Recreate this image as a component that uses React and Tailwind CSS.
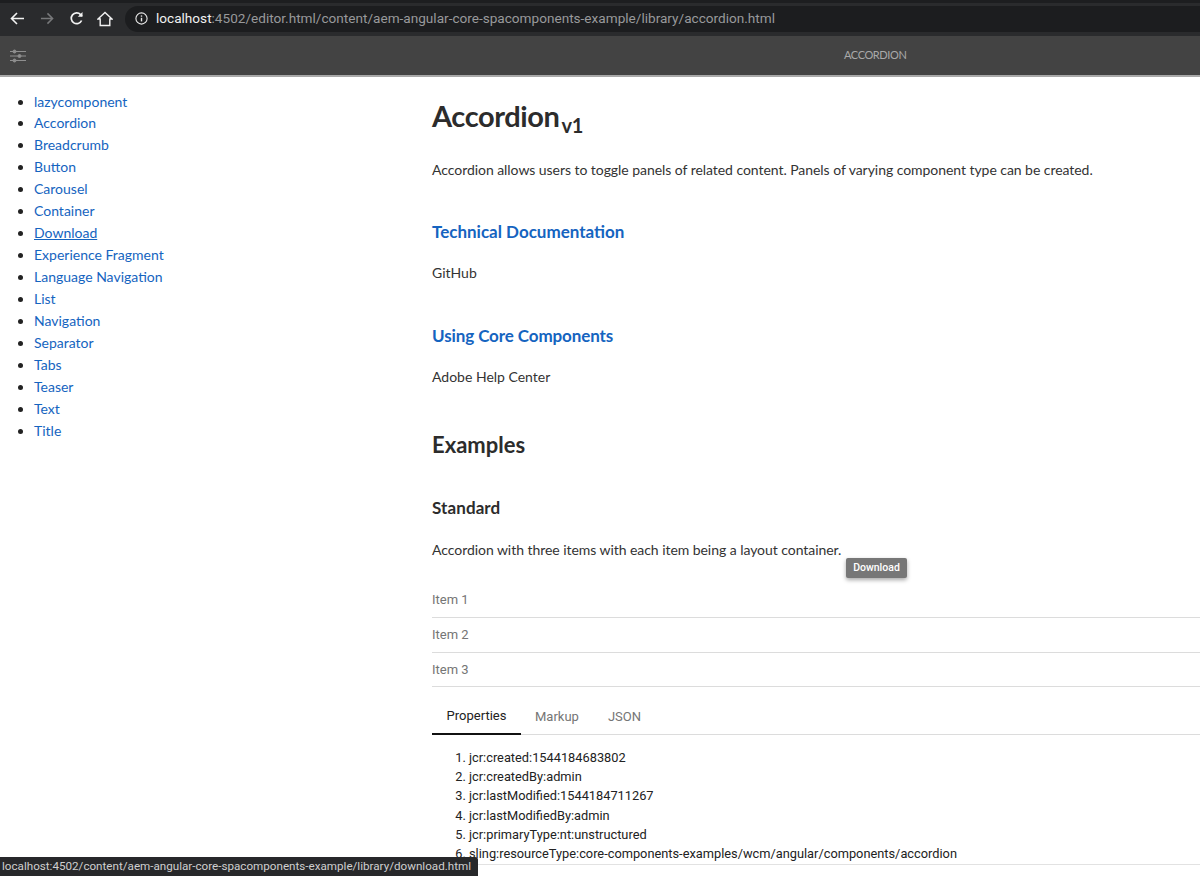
import React from "react";

const links = ["lazycomponent","Accordion","Breadcrumb","Button","Carousel","Container","Download","Experience Fragment","Language Navigation","List","Navigation","Separator","Tabs","Teaser","Text","Title"];
const props = ["jcr:created:1544184683802","jcr:createdBy:admin","jcr:lastModified:1544184711267","jcr:lastModifiedBy:admin","jcr:primaryType:nt:unstructured","sling:resourceType:core-components-examples/wcm/angular/components/accordion"];
const lato = "font-['Lato','Noto_Sans',sans-serif]";
const roboto = "font-['Roboto',sans-serif]";

function Sliders() {
  return (
    <svg width="18" height="14" viewBox="0 0 18 14" fill="none" stroke="#8f8f8f" strokeWidth="1">
      <path d="M1 2.5h3M7 2.5h10M1 7h8M12 7h5M1 11.5h3M7 11.5h10" />
      <circle cx="5.5" cy="2.5" r="1.5" fill="#8f8f8f" />
      <circle cx="10.5" cy="7" r="1.5" fill="#8f8f8f" />
      <circle cx="5.5" cy="11.5" r="1.5" fill="#8f8f8f" />
    </svg>
  );
}

export default function App() {
  return (
    <div className={`relative h-[876px] w-[1200px] overflow-hidden bg-white ${lato}`}>
      <div className="flex h-[36px] items-center bg-[#2a2b2d] border-t-[3px] border-[#1d1e20] pb-[2px]">
        <svg className="ml-[10px]" width="15" height="15" viewBox="0 0 15 15" fill="none" stroke="#f2f2f2" strokeWidth="1.6"><path d="M14 7.5H1.5M7 2L1.5 7.5 7 13" /></svg>
        <svg className="ml-[15px]" width="14" height="15" viewBox="0 0 15 15" fill="none" stroke="#77787a" strokeWidth="1.6"><path d="M1 7.5h12.5M8 2l5.5 5.5L8 13" /></svg>
        <svg className="ml-[15px]" width="15" height="15" viewBox="0 0 15 15" fill="none" stroke="#f2f2f2" strokeWidth="1.7"><path d="M12.6 9.5A5.4 5.4 0 1 1 11.6 3.6L13 5" /><path d="M13.5 1v4.7H8.8" fill="#f2f2f2" stroke="none" /></svg>
        <svg className="ml-[13px]" width="16" height="16" viewBox="0 0 16 16" fill="none" stroke="#f2f2f2" strokeWidth="1.4"><path d="M1 8l7-6.5L15 8h-2.2v6.5H3.2V8z" /></svg>
        <div className={`ml-[12px] flex h-[26px] flex-1 items-center rounded-l-[13px] bg-[#1c1d1f] pl-[10px] ${roboto} text-[13.6px]`}>
          <svg width="13" height="13" viewBox="0 0 13 13" fill="none" stroke="#e8e8e8" strokeWidth="1.1"><circle cx="6.5" cy="6.5" r="5.6" /><path d="M6.5 5.8v3.6" strokeWidth="1.4" /><path d="M6.5 3.4v1.3" strokeWidth="1.4" /></svg>
          <span className="ml-[8px] text-[#f0f0f0]">localhost</span>
          <span className="text-[#98999b]">:4502/editor.html/content/aem-angular-core-spacomponents-example/library/accordion.html</span>
        </div>
      </div>
      <div className="relative flex h-[41px] items-center border-b-[2px] border-[#a8a8a8] bg-[#434343] pl-[9px]">
        <Sliders />
        <span className="absolute left-[844px] text-[11px] tracking-[-0.4px] text-[#a9a9a9]">ACCORDION</span>
      </div>
      <div className="flex">
        <ul className="w-[432px] list-disc pl-[34px] pt-[13.5px] text-[14px] leading-[21.95px] text-[#1564c0] marker:text-[#222]">
          {links.map((l) => (
            <li key={l} className={l === "Download" ? "underline" : ""}>{l}</li>
          ))}
        </ul>
        <main className="flex-1 text-[#333]">
          <h1 className="mt-[21px] h-[36px] text-[29px] leading-[36px] font-bold tracking-[-0.4px] text-[#2c2c2c]">
            Accordion<sub className="ml-[2px] text-[20px] align-[-1px] leading-none">v1</sub>
          </h1>
          <p className="mt-[25px] h-[22px] text-[14px] leading-[22px] tracking-[-0.05px]">Accordion allows users to toggle panels of related content. Panels of varying component type can be created.</p>
          <h3 className="mt-[40px] h-[22px] text-[17px] leading-[22px] font-bold text-[#1564c0]">Technical Documentation</h3>
          <p className="mt-[19px] h-[22px] text-[14px] leading-[22px]">GitHub</p>
          <h3 className="mt-[41px] h-[22px] text-[17px] leading-[22px] font-bold tracking-[-0.1px] text-[#1564c0]">Using Core Components</h3>
          <p className="mt-[19px] h-[22px] text-[14px] leading-[22px]">Adobe Help Center</p>
          <h2 className="mt-[43px] h-[28px] text-[22px] leading-[28px] font-bold text-[#2c2c2c]">Examples</h2>
          <h4 className="mt-[38px] h-[22px] text-[17px] leading-[22px] font-bold tracking-[0.1px] text-[#2c2c2c]">Standard</h4>
          <p className="mt-[20px] h-[22px] text-[14px] leading-[22px] tracking-[-0.05px]">Accordion with three items with each item being a layout container.</p>
          <div className={`mt-[22px] ${roboto} text-[13px] text-[#757575]`}>
            <div className="flex h-[35px] items-center border-b border-[#dcdcdc]">Item 1</div>
            <div className="flex h-[35px] items-center border-b border-[#dcdcdc] pb-[1px]">Item 2</div>
            <div className="flex h-[34px] items-center border-b border-[#dcdcdc]">Item 3</div>
          </div>
          <div className={`mt-[12px] flex h-[36px] border-b border-[#dcdcdc] ${roboto} text-[13px] text-[#757575]`}>
            <div className="flex h-[36px] w-[89px] items-center justify-center border-b-2 border-[#111] text-[#222]">Properties</div>
            <div className="ml-[14px] flex h-[35px] items-center">Markup</div>
            <div className="ml-[29px] flex h-[35px] items-center">JSON</div>
          </div>
          <ol className={`mt-[13px] list-decimal pl-[37px] ${roboto} text-[12.8px] leading-[19.2px] text-[#222]`}>
            {props.map((p) => <li key={p}>{p}</li>)}
          </ol>
        </main>
      </div>
      <div className={`absolute left-[846px] top-[558px] flex h-[20px] w-[61px] items-center justify-center rounded-[2px] bg-[#777] ${roboto} text-[10.5px] font-medium text-white shadow-[0_2px_4px_rgba(0,0,0,0.35)]`}>Download</div>
      <div className="absolute bottom-0 left-[432px] right-0 h-[12px] border-t border-[#e2e2e2] bg-white" />
      <div className={`absolute bottom-0 left-0 flex h-[19px] w-[478px] items-center rounded-tr-[3px] bg-[#27282a] pl-[2px] ${roboto} text-[11.65px] whitespace-nowrap text-[#cfcfcf]`}>localhost:4502/content/aem-angular-core-spacomponents-example/library/download.html</div>
    </div>
  );
}
